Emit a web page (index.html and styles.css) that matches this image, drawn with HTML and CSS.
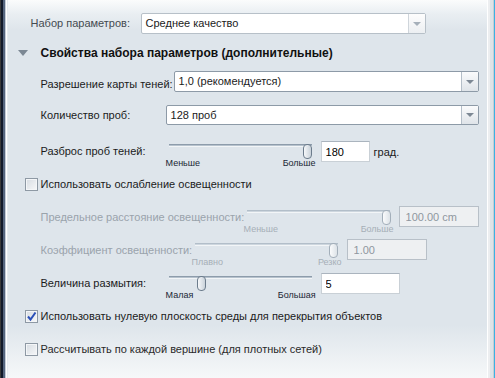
FILE: index.html
```html
<!DOCTYPE html>
<html lang="ru">
<head>
  <meta charset="UTF-8" />
  <title>Свойства набора параметров</title>
  <link rel="stylesheet" href="styles.css">
</head>
<body>
  <div class="window">
    <div class="edge-left"></div>

    <div class="panel">
      <!-- PRESET -->
      <div class="row row-preset">
        <span class="label label-preset">Набор параметров:</span>
        <div class="select select-light select-preset">
          <span class="select-value">Среднее качество</span>
          <span class="select-btn"><i class="arrow"></i></span>
        </div>
      </div>

      <!-- SECTION HEADER -->
      <div class="section-head">
        <span class="twisty"></span>
        <span>Свойства набора параметров (дополнительные)</span>
      </div>

      <!-- SHADOW MAP -->
      <div class="row row-shadowmap">
        <span class="label label-shadowmap">Разрешение карты теней:</span>
        <div class="select select-shadowmap">
          <span class="select-value">1,0 (рекомендуется)</span>
          <span class="select-btn"><i class="arrow"></i></span>
        </div>
      </div>

      <!-- SAMPLES -->
      <div class="row row-samples">
        <span class="label label-samples">Количество проб:</span>
        <div class="select select-samples">
          <span class="select-value">128 проб</span>
          <span class="select-btn"><i class="arrow"></i></span>
        </div>
      </div>

      <!-- SPREAD -->
      <div class="row slider-row row-spread">
        <span class="label label-spread">Разброс проб теней:</span>
        <div class="slider">
          <div class="slider-rail">
            <div class="slider-track"></div>
            <span class="slider-thumb" style="left: 137px"></span>
          </div>
          <div class="slider-ticks"><span>Меньше</span><span>Больше</span></div>
        </div>
        <input class="field field-small" type="text" value="180">
        <span class="unit">град.</span>
      </div>

      <!-- ATTENUATION -->
      <div class="check-row row-atten">
        <span class="checkbox"></span>
        <span class="check-label">Использовать ослабление освещенности</span>
      </div>

      <div class="row slider-row row-distance disabled">
        <span class="label label-distance">Предельное расстояние освещенности:</span>
        <div class="slider">
          <div class="slider-rail">
            <div class="slider-track"></div>
            <span class="slider-thumb" style="left: 138px"></span>
          </div>
          <div class="slider-ticks"><span>Меньше</span><span>Больше</span></div>
        </div>
        <input class="field field-wide" type="text" value="100.00 cm" disabled>
      </div>

      <div class="row slider-row row-coef disabled">
        <span class="label label-coef">Коэффициент освещенности:</span>
        <div class="slider">
          <div class="slider-rail">
            <div class="slider-track"></div>
            <span class="slider-thumb" style="left: 137px"></span>
          </div>
          <div class="slider-ticks"><span>Плавно</span><span>Резко</span></div>
        </div>
        <input class="field field-wide" type="text" value="1.00" disabled>
      </div>

      <!-- BLUR -->
      <div class="row slider-row row-blur">
        <span class="label label-blur">Величина размытия:</span>
        <div class="slider">
          <div class="slider-rail">
            <div class="slider-track"></div>
            <span class="slider-thumb" style="left: 31px"></span>
          </div>
          <div class="slider-ticks"><span>Малая</span><span>Большая</span></div>
        </div>
        <input class="field field-blur" type="text" value="5">
      </div>

      <!-- OPTIONS -->
      <div class="check-row row-ground">
        <span class="checkbox checked">
          <svg width="11" height="11" viewBox="0 0 11 11"><path d="M2 5.5 L4.5 8.5 L9.5 1.5" fill="none" stroke="#2b50b8" stroke-width="2"/></svg>
        </span>
        <span class="check-label">Использовать нулевую плоскость среды для перекрытия объектов</span>
      </div>

      <div class="check-row row-vertex">
        <span class="checkbox"></span>
        <span class="check-label">Рассчитывать по каждой вершине (для плотных сетей)</span>
      </div>
    </div>

    <div class="edge-right"></div>
  </div>
</body>
</html>
```

FILE: styles.css
```css
:root {
  --panel-bg: #dee5eb;
  --text: #1b1b1b;
  --text-off: #9aa3ab;
  --border: #a7b1bb;
  --font: "Liberation Sans", Arial, sans-serif;
}
* {
  margin: 0;
  padding: 0;
  box-sizing: border-box;
}
body {
  width: 495px;
  height: 378px;
  overflow: hidden;
  font-family: var(--font);
  font-size: 11px;
  line-height: 13px;
  color: var(--text);
  background: #ffffff;
}
.window {
  display: flex;
  height: 378px;
}
.edge-left {
  width: 8px;
  background: linear-gradient(to right, #3a3a3a 0 1px, #121a2a 1px 3px, #55657e 3px 5px, #c4ccd6 5px 6px, #ffffff 6px 7px, #e6ebef 7px 8px);
}
.edge-right {
  width: 9px;
  background: linear-gradient(to right, #ffffff 0 1px, #eceef0 1px 3px, #dfe3e7 3px 6px, #c6cdd4 6px 7px, #3ab2e4 7px 8px, #1b4a78 8px 9px);
}
.panel {
  flex: 1;
  padding: 13px 8px 0 33px;
  background: linear-gradient(to bottom, #fbfcfc 0, #e9eef2 14px, var(--panel-bg) 30px, var(--panel-bg) 325px, #f6f8f9 378px);
}

/* Rows */
.row {
  display: flex;
  align-items: center;
}
.label {
  flex: none;
  white-space: nowrap;
}
.row-preset { height: 21px; margin-left: -10px; }
.label-preset { width: 110px; color: #444a50; }
.row-shadowmap { height: 21px; margin-top: 8px; align-items: flex-end; }
.row-shadowmap .label { padding-bottom: 1px; }
.label-shadowmap { width: 133px; }
.row-samples { height: 20px; margin-top: 13px; }
.label-samples { width: 125px; }

/* Section header */
.section-head {
  display: flex;
  align-items: center;
  height: 20px;
  margin: 9px 0 0 -23px;
  font-size: 12px;
  font-weight: bold;
  color: #111111;
}
.twisty {
  width: 0;
  height: 0;
  margin-right: 13px;
  border-left: 5px solid transparent;
  border-right: 5px solid transparent;
  border-top: 6px solid #7c8894;
}

/* Dropdowns */
.select {
  display: flex;
  height: 100%;
  background: #ffffff;
  border: 1px solid #8d9aa7;
  border-radius: 2px;
}
.select-light { border-color: #b7c0c8; }
.select-preset { width: 285px; }
.select-shadowmap { width: 305px; }
.select-samples { width: 313px; }
.select-value {
  flex: 1;
  padding: 2px 4px;
  line-height: 15px;
  white-space: nowrap;
  overflow: hidden;
}
.select-btn {
  width: 17px;
  display: flex;
  align-items: center;
  justify-content: center;
  border-left: 1px solid #b4bec8;
  background: linear-gradient(to bottom, #fafbfc, #dfe4e9);
}
.select-light .select-btn { border-left-color: #cfd5db; background: linear-gradient(to bottom, #fdfdfd, #eceff2); }
.arrow {
  width: 0;
  height: 0;
  border-left: 4px solid transparent;
  border-right: 4px solid transparent;
  border-top: 4px solid #7d8894;
}
.select-light .arrow { border-top-color: #a6b0ba; }

/* Sliders */
.slider-row {
  height: 28px;
  align-items: flex-start;
}
.slider-row .label { margin-top: 7px; }
.label-spread { width: 125px; }
.label-distance { width: 203px; }
.label-coef { width: 151px; }
.label-blur { width: 125px; }
.row-spread { margin-top: 13px; }
.row-distance { margin-top: 13px; }
.row-coef { margin-top: 5px; }
.row-blur { margin-top: 5px; }

.slider {
  width: 150px;
  flex: none;
}
.slider-rail {
  position: relative;
  height: 15px;
}
.slider-track {
  margin: 6px 4px 0 3px;
  height: 3px;
  border-top: 1px solid #8d9cab;
  border-bottom: 1px solid #f2f5f7;
  background: #b6c2cd;
}
.slider-thumb {
  position: absolute;
  top: 0;
  width: 9px;
  height: 15px;
  border: 1px solid #6c7c8c;
  border-radius: 4px;
  background: linear-gradient(to right, #f6f8fa, #c9d2da);
}
.slider-ticks {
  display: flex;
  justify-content: space-between;
  margin-top: -1px;
  font-size: 9px;
  line-height: 11px;
  color: #1a2634;
}

/* Text fields */
.field {
  flex: none;
  height: 21px;
  margin: 3px 0 0 5px;
  padding: 0 4px;
  border: 1px solid #c9d0d6;
  border-top-color: #aab4be;
  background: #ffffff;
  font-family: var(--font);
  font-size: 11px;
  color: #000000;
  outline: none;
}
.field-small { width: 49px; }
.field-wide { width: 80px; margin-top: 2px; padding-left: 6px; }
.field-blur { width: 79px; }
.field:disabled {
  background: #eef0f2;
  border-color: #b8c0c8;
  color: #8e979f;
}
.unit { margin: 8px 0 0 4px; }

/* Disabled rows */
.disabled .label { color: var(--text-off); }
.disabled .slider-track { border-top-color: #b2bec9; background: #cdd6de; }
.disabled .slider-thumb { border-color: #a3afba; background: linear-gradient(to right, #fafbfc, #dde3e8); }
.disabled .slider-ticks { color: #a6afb7; }

/* Checkboxes */
.check-row {
  display: flex;
  align-items: center;
  height: 13px;
  margin-left: -16px;
}
.row-atten { margin-top: 12px; }
.row-ground { margin-top: 12px; }
.row-vertex { margin-top: 20px; }
.checkbox {
  width: 13px;
  height: 13px;
  margin-right: 3px;
  display: flex;
  align-items: center;
  justify-content: center;
  border: 1px solid #8e99a4;
  background: linear-gradient(135deg, #d6dce2, #f7f8f9);
  box-shadow: inset 0 0 0 1px #f4f6f8;
}
.check-label { white-space: nowrap; }
.row-vertex .check-label { color: #2a2a2a; }
```
